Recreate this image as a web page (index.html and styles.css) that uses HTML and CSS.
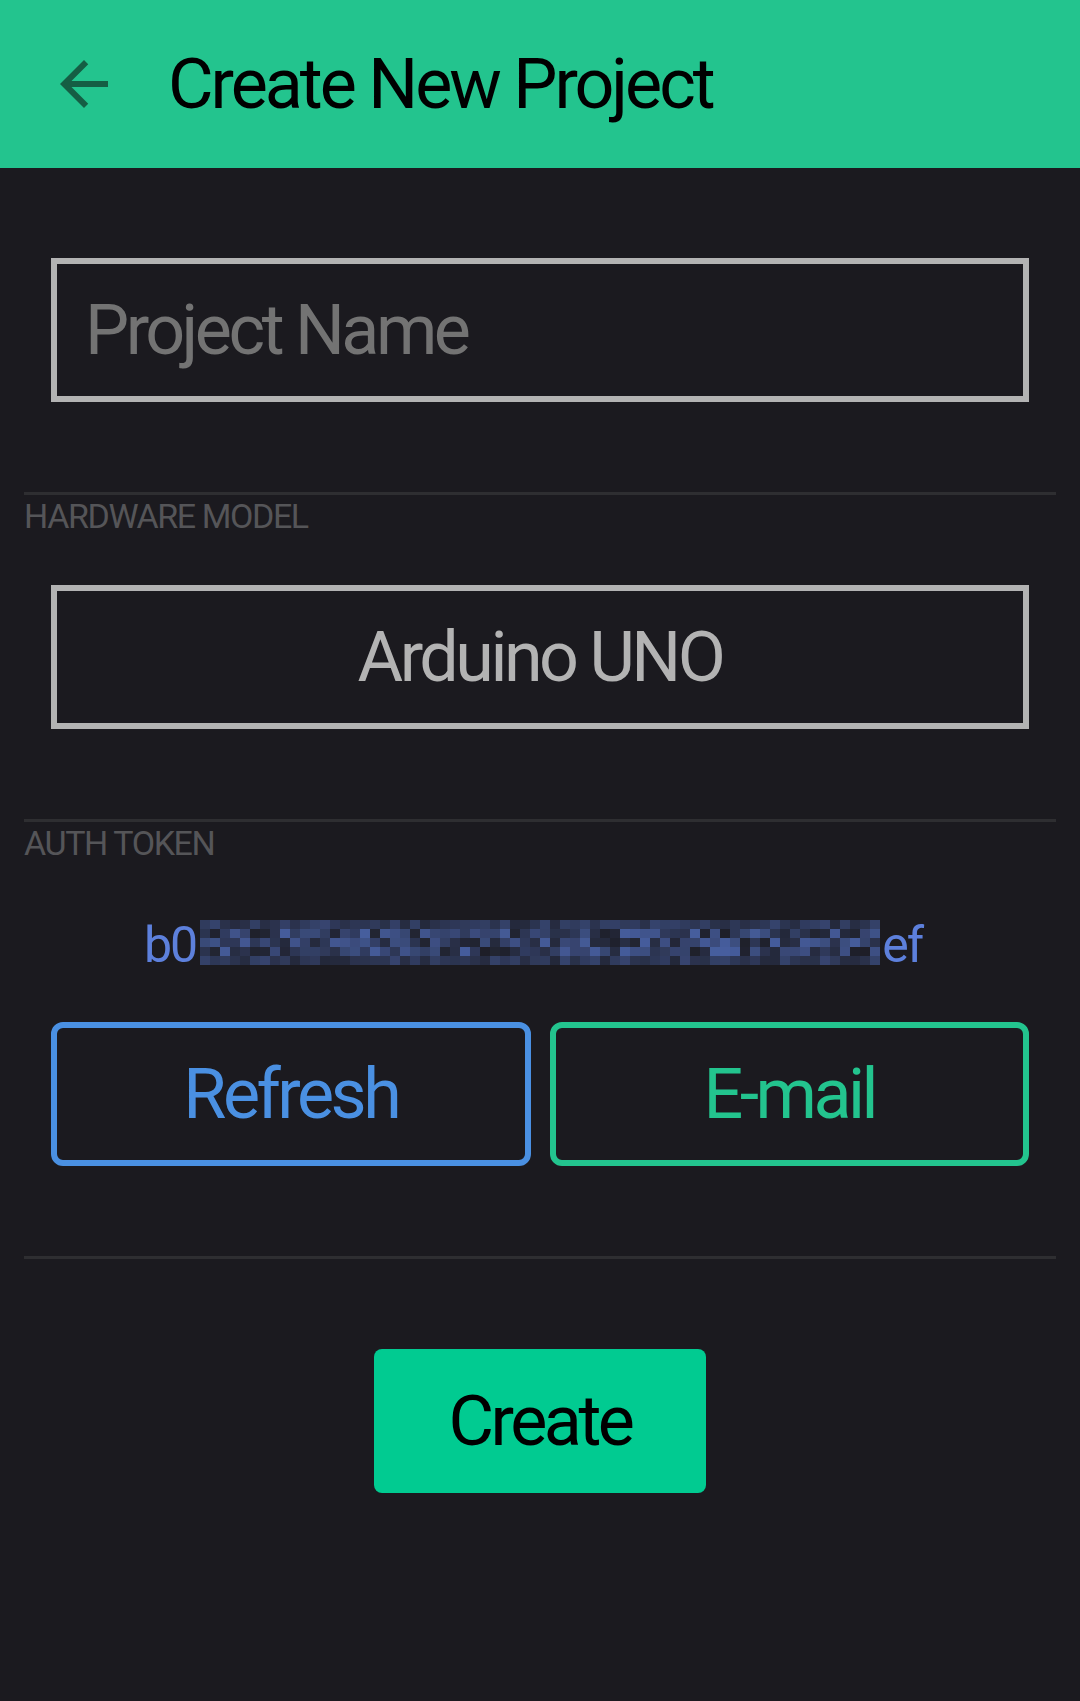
FILE: index.html
```html
<!DOCTYPE html>
<html lang="en">
<head>
    <meta charset="UTF-8">
    <meta name="viewport" content="width=device-width, initial-scale=1.0">
    <title>Create New Project</title>
    <link rel="stylesheet" href="styles.css">
</head>
<body>

    <header class="toolbar">
        <svg class="back" viewBox="0 0 24 24"><path d="M20 11H7.83l5.59-5.59L12 4l-8 8 8 8 1.41-1.41L7.83 13H20v-2z"/></svg>
        <h1>Create New Project</h1>
    </header>

    <div class="content">
        <div class="box-wrap">
            <input type="text" class="name-input" placeholder="Project Name">
        </div>

        <div class="section">
            <div class="section-label">HARDWARE MODEL</div>
            <div class="select-box">Arduino UNO</div>
        </div>

        <div class="section">
            <div class="section-label">AUTH TOKEN</div>
            <div class="token">
                <span>b0</span><span id="mosaic" class="mosaic"></span><span>ef</span>
            </div>
            <div class="token-buttons">
                <button class="btn-outline refresh">Refresh</button>
                <button class="btn-outline email">E-mail</button>
            </div>
        </div>

        <div class="section create-row">
            <button class="create">Create</button>
        </div>
    </div>

    <script>
        // hidden part of the token: a grid of blue squares
        const mosaic = document.getElementById("mosaic");
        let seed = 11;
        function rand() {
            seed = (seed * 9301 + 49297) % 233280;
            return seed / 233280;
        }
        for (let row = 0; row < 5; row++) {
            for (let col = 0; col < 68; col++) {
                const cell = document.createElement("i");
                const edge = row === 0 || row === 4;
                const alpha = edge ? 0.15 + rand() * 0.3 : 0.05 + rand() * 0.65;
                cell.style.background = "rgba(90, 124, 214, " + alpha.toFixed(2) + ")";
                mosaic.appendChild(cell);
            }
        }
    </script>

</body>
</html>
```

FILE: styles.css
```css
body {
    margin: 0;
    font-family: Roboto, "Liberation Sans", sans-serif;
    background-color: #1b1a1f;
    min-height: 1701px;
}
.toolbar {
    height: 168px;
    background-color: #23c48e;
    display: flex;
    align-items: center;
}
.back {
    width: 72px;
    height: 72px;
    margin-left: 48px;
    fill: #155e44;
}
.toolbar h1 {
    margin: 0 0 0 48px;
    font-size: 70px;
    font-weight: 400;
    letter-spacing: -3px;
    color: #000;
}
.content {
    padding: 90px 24px 0;
}
.box-wrap {
    padding: 0 27px;
}
.name-input {
    box-sizing: border-box;
    display: block;
    width: 100%;
    height: 144px;
    margin: 0;
    padding: 0 28px;
    border: 6px solid #b3b3b3;
    background: transparent;
    font-family: Roboto, sans-serif;
    font-size: 70px;
    letter-spacing: -3.5px;
    color: #b3b3b3;
    outline: none;
}
.name-input::placeholder {
    color: #737373;
}
.section {
    margin-top: 90px;
    border-top: 3px solid #2e2e31;
}
.section-label {
    margin-top: 4px;
    font-size: 34px;
    line-height: 34px;
    letter-spacing: -1.4px;
    color: #555558;
}
.select-box {
    box-sizing: border-box;
    height: 144px;
    margin: 52px 27px 0;
    border: 6px solid #b3b3b3;
    display: flex;
    align-items: center;
    justify-content: center;
    font-size: 70px;
    letter-spacing: -3.5px;
    color: #b3b3b3;
}
.token {
    height: 60px;
    margin-top: 55px;
    padding-right: 14px;
    display: flex;
    justify-content: center;
    align-items: flex-start;
    font-size: 50px;
    line-height: 60px;
    letter-spacing: -2px;
    color: #5d80dc;
}
.mosaic {
    display: grid;
    grid-template-columns: repeat(68, 10px);
    grid-auto-rows: 9px;
    margin: 5px 2px 0 4px;
}
.token-buttons {
    margin: 47px 27px 0;
    display: grid;
    grid-template-columns: 1fr 1fr;
    gap: 19px;
}
.btn-outline {
    box-sizing: border-box;
    height: 144px;
    border: 6px solid;
    border-radius: 12px;
    background: transparent;
    font-family: Roboto, sans-serif;
    font-size: 70px;
    letter-spacing: -3.5px;
    padding: 0;
}
.refresh {
    border-color: #4a90e2;
    color: #4a90e2;
}
.email {
    border-color: #23c48e;
    color: #23c48e;
}
.create-row {
    display: flex;
    justify-content: center;
    padding-top: 90px;
}
.create {
    width: 332px;
    height: 144px;
    border: none;
    border-radius: 8px;
    background-color: #01cb91;
    color: #000;
    font-family: Roboto, sans-serif;
    font-size: 70px;
    letter-spacing: -3.5px;
    padding: 0;
}
```
